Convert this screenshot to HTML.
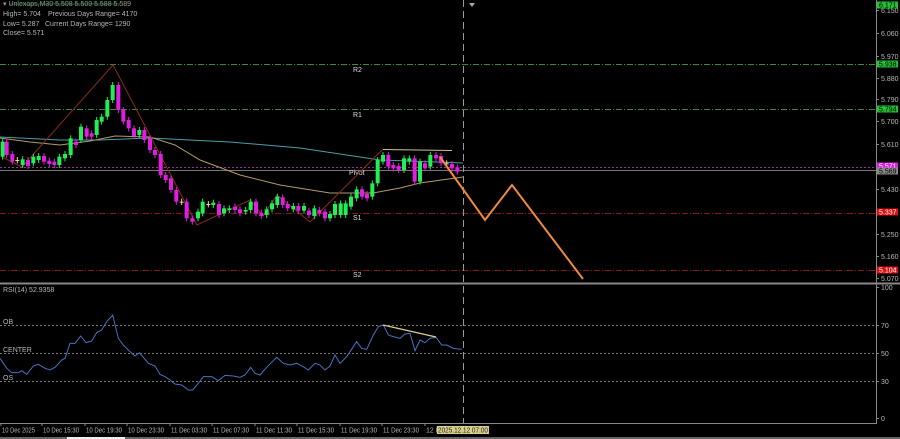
<!DOCTYPE html>
<html><head><meta charset="utf-8"><style>
html,body{margin:0;padding:0;background:#000;width:900px;height:439px;overflow:hidden}
svg{display:block;fill:#b8b8b8}
text{font-family:"Liberation Sans",sans-serif;font-size:7px}
</style></head><body>
<svg id="s" width="900" height="439" viewBox="0 0 900 439" xmlns="http://www.w3.org/2000/svg">
<rect width="900" height="439" fill="#000"/>
<line x1="876.5" y1="0" x2="876.5" y2="424" stroke="#888" stroke-width="1"/>
<line x1="0" y1="283.5" x2="900" y2="283.5" stroke="#888" stroke-width="2"/>
<line x1="0" y1="423.5" x2="876" y2="423.5" stroke="#888" stroke-width="1"/>
<rect x="0" y="437" width="900" height="2" fill="#666"/>
<rect x="67" y="437" width="58" height="2" fill="#eee"/>
<g stroke-width="1" fill="none">
<line x1="0" y1="64.5" x2="876" y2="64.5" stroke="#3c8a3c" stroke-dasharray="6,2,1,2"/>
<line x1="0" y1="109.5" x2="876" y2="109.5" stroke="#3c8a3c" stroke-dasharray="6,2,1,2"/>
<line x1="0" y1="167.5" x2="876" y2="167.5" stroke="#a030a0" stroke-dasharray="2,2"/>
<line x1="0" y1="170.5" x2="876" y2="170.5" stroke="#777"/>
<line x1="0" y1="213.5" x2="876" y2="213.5" stroke="#8a1818" stroke-dasharray="6,2,1,2"/>
<line x1="0" y1="270.5" x2="876" y2="270.5" stroke="#8a1818" stroke-dasharray="6,2,1,2"/>
<line x1="0" y1="325.5" x2="876" y2="325.5" stroke="#777" stroke-dasharray="2,2"/>
<line x1="0" y1="353.5" x2="876" y2="353.5" stroke="#777" stroke-dasharray="2,2"/>
<line x1="0" y1="381.5" x2="876" y2="381.5" stroke="#777" stroke-dasharray="2,2"/>
</g>
<g fill="#ddd">
<text x="353" y="72">R2</text><text x="353" y="117">R1</text>
<text x="349" y="175">Pivot</text><text x="353" y="220">S1</text><text x="353" y="277">S2</text>
</g>
<polyline fill="none" stroke="#4a9fa8" stroke-width="1" points="0,137 60,140 100,140 150,138 230,142 300,148 380,160 463,163"/>
<polyline fill="none" stroke="#b39a6a" stroke-width="1" points="0,138 30,142 60,145 90,141 115,136 150,137 175,145 200,160 240,175 280,185 330,193 373,193 400,188 420,183 463,177"/>
<polyline fill="none" stroke="#8a2a1a" stroke-width="1" points="2,157 22,167 113,65 197,225 250,200 263,216 277,195 310,222 383,149"/>
<line x1="383" y1="149.5" x2="452" y2="150.5" stroke="#d4c48a" stroke-width="1"/>
<g id="candles"></g>
<line x1="463.5" y1="0" x2="463.5" y2="423" stroke="#999" stroke-dasharray="7,4" stroke-width="1"/>
<polygon points="469,3 475,3 472,7" fill="#aaa"/>
<polyline fill="none" stroke="#f08a3c" stroke-width="2" points="440,157 485,220 512,185 583,279"/>
<polyline id="rsi" fill="none" stroke="#4a72c0" stroke-width="1"/>
<line x1="383" y1="325" x2="436" y2="337" stroke="#d8d08a" stroke-width="1.3"/>
<text x="3" y="292" font-size="6.5">RSI(14) 52.9358</text>
<text x="3" y="324">OB</text><text x="3" y="352">CENTER</text><text x="3" y="380">OS</text>
<text x="3" y="6" fill="#9a9a9a">▾ Unlexaps,M30  5.508 5.509 5.588 5.589</text>
<line x1="10" y1="4" x2="120" y2="4" stroke="#2f7f2f" stroke-width="0.8"/>
<text x="3" y="16">High= 5.704</text><text x="48" y="16">Previous Days Range= 4170</text>
<text x="3" y="26">Low= 5.287</text><text x="45" y="26">Current Days Range= 1290</text>
<text x="3" y="35">Close= 5.571</text>
<g id="ax"></g>
<g id="tx"></g>
<rect x="437" y="426" width="52" height="8" fill="#d8d08a"/>
<text x="438" y="432.5" fill="#222" font-size="6.5" textLength="50" lengthAdjust="spacingAndGlyphs">2025.12.12 07:00</text>
</svg>
<script>
var NS="http://www.w3.org/2000/svg",s=document.getElementById('s');
function el(t,a,p){var e=document.createElementNS(NS,t);for(var k in a)e.setAttribute(k,a[k]);(p||s).appendChild(e);return e;}
var c=[[8,'g',275,320],[20,'m',275,315],[37,'m',312,335],[52,'x',330,331],[68,'g',328,345],[84,'m',330,348],[100,'g',320,340],[116,'g',318,330],[132,'m',318,335],[148,'m',332,342],[163,'m',335,345],[178,'g',320,345],[195,'g',312,325],[212,'g',265,315],[228,'m',275,285],[243,'g',230,270],[260,'m',235,260],[275,'m',250,260],[290,'g',210,255],[305,'g',200,215],[322,'g',150,200],[338,'g',105,150],[355,'m',105,180],[370,'m',180,215],[386,'m',210,235],[402,'m',235,258],[418,'g',240,255],[433,'m',240,270],[450,'m',265,300],[465,'m',300,315],[482,'m',312,375],[497,'m',375,390],[513,'m',385,420],[529,'m',420,455],[545,'x',455,456],[560,'m',455,505],[577,'m',505,515],[594,'g',485,505],[608,'g',455,490],[625,'x',462,463],[640,'g',458,465],[657,'m',462,495],[672,'g',475,490],[688,'g',475,480],[705,'m',470,480],[720,'m',478,490],[737,'g',480,485],[752,'g',455,480],[768,'m',455,490],[784,'m',488,498],[800,'g',478,495],[816,'g',460,478],[832,'g',440,465],[848,'m',442,465],[863,'m',462,475],[880,'g',468,478],[895,'m',468,482],[912,'g',468,482],[927,'m',482,495],[943,'g',475,498],[958,'m',480,490],[975,'m',485,505],[990,'g',492,505],[1005,'g',462,495],[1022,'g',460,495],[1037,'g',460,495],[1053,'g',440,470],[1070,'g',418,445],[1086,'m',418,440],[1101,'m',432,445],[1117,'g',400,440],[1133,'g',330,400],[1149,'g',315,335],[1165,'m',315,350],[1180,'m',345,355],[1196,'m',348,360],[1212,'g',325,360],[1228,'g',325,335],[1244,'m',325,395],[1260,'g',335,395],[1275,'m',340,355],[1291,'g',315,350],[1308,'m',315,325],[1323,'m',318,340],[1340,'x',340,341],[1356,'m',342,355],[1372,'m',352,365]];
var g=document.getElementById('candles');
c.forEach(function(d){var x=d[0]/3,t=50+d[2]/3,b=50+d[3]/3;var col=d[1]=='g'?'#22ee55':d[1]=='m'?'#e01ee0':'#dddd99';
el('line',{x1:x,y1:t-3,x2:x,y2:b+3,stroke:col,'stroke-width':1},g);
el('rect',{x:x-2,y:t,width:4,height:Math.max(1,b-t),fill:col},g);});
var r=[[0,235],[20,265],[35,278],[55,278],[65,272],[80,283],[100,258],[115,253],[135,265],[150,270],[165,262],[185,240],[195,235],[210,190],[225,190],[242,168],[258,188],[275,183],[290,158],[305,150],[320,125],[338,105],[355,175],[370,195],[390,215],[405,228],[418,218],[430,232],[445,250],[465,258],[480,283],[495,290],[510,300],[525,312],[545,315],[565,330],[578,330],[595,310],[610,290],[635,290],[655,302],[675,286],[700,288],[720,292],[735,285],[752,262],[765,280],[780,285],[800,262],[830,232],[850,250],[870,255],[890,250],[910,260],[925,270],[945,250],[960,255],[975,270],[990,258],[1005,225],[1020,250],[1040,230],[1070,185],[1085,205],[1100,208],[1120,165],[1135,140],[1150,135],[1165,165],[1180,170],[1200,175],[1215,162],[1230,160],[1245,212],[1260,180],[1275,188],[1290,175],[1308,172],[1325,195],[1340,195],[1360,205],[1385,208]];
document.getElementById('rsi').setAttribute('points',r.map(function(p){return (p[0]/3)+','+(280+p[1]/3)}).join(' '));
var ax=document.getElementById('ax');
[['6.150',13],['6.060',36],['5.970',59],['5.880',81],['5.790',102],['5.700',124],['5.610',147],['5.430',192],['5.250',237],['5.160',259],['5.070',281],['100',290],['70',328],['50',356],['30',384],['0',421]].forEach(function(a){
el('line',{x1:876,y1:a[1]-2.5,x2:879,y2:a[1]-2.5,stroke:'#888'},ax);var t=el('text',{x:881,y:a[1],'font-size':6.5},ax);t.textContent=a[0];});
[['6.171',5,'#22c033','#000'],['5.938',64,'#22c033','#000'],['5.794',109,'#22c033','#000'],['5.571',166,'#e020e0','#fff'],['5.569',171,'#888','#000'],['5.337',212,'#e01010','#fff'],['5.104',270,'#e01010','#fff']].forEach(function(a){
el('rect',{x:877,y:a[1]-3.5,width:21,height:7,fill:a[2]},ax);var t=el('text',{x:879,y:a[1]+2.5,fill:a[3],'font-size':6.5},ax);t.textContent=a[0];});
var tx=document.getElementById('tx');
[['10 Dec 2025',2],['10 Dec 15:30',43],['10 Dec 19:30',86],['10 Dec 23:30',128],['11 Dec 03:30',171],['11 Dec 07:30',213],['11 Dec 11:30',256],['11 Dec 15:30',298],['11 Dec 19:30',341],['11 Dec 23:30',383],['12 D',426]].forEach(function(a){
el('line',{x1:a[1]-1,y1:423,x2:a[1]-1,y2:426,stroke:'#888'},tx);
var o={x:a[1],y:432.5,'font-size':6.5};if(a[0].length>5){o.textLength=a[0].length>11?36:33;o.lengthAdjust='spacingAndGlyphs';}
var t=el('text',o,tx);t.textContent=a[0];});
</script>
</body></html>
